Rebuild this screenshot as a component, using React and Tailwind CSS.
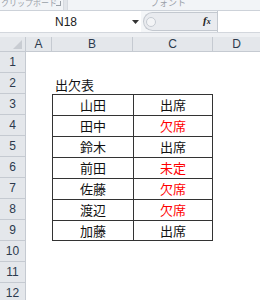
import React from 'react';

const rows = [
  null,
  null,
  { name: '山田', status: '出席' },
  { name: '田中', status: '欠席' },
  { name: '鈴木', status: '出席' },
  { name: '前田', status: '未定' },
  { name: '佐藤', status: '欠席' },
  { name: '渡辺', status: '欠席' },
  { name: '加藤', status: '出席' },
  null,
  null,
  null,
];

const cjk = { fontFamily: '"Noto Sans CJK JP", "Noto Sans", sans-serif' };

const RowHead = ({ n }) => (
  <div className="w-[26px] h-full shrink-0 bg-[#e4e7eb] border-r border-b border-[#c5cad1] flex items-center justify-center text-[12px] text-[#2c3a4d]">
    {n}
  </div>
);

const App = () => {
  return (
    <div
      className="w-[260px] h-[300px] overflow-hidden bg-white flex flex-col"
      style={{ fontFamily: '"Liberation Sans", "Noto Sans CJK JP", sans-serif' }}
    >
      {/* ribbon leftovers */}
      <div className="h-[10px] shrink-0 flex bg-[#f2f4f7] overflow-hidden">
        <div className="w-[64px] relative overflow-hidden border-r border-[#d6dae0]">
          <span className="absolute left-[1px] top-[-1px] text-[8px] leading-none whitespace-nowrap text-[#9aa0a8]" style={cjk}>
            クリップボード
          </span>
          <span className="absolute right-[2px] top-[1px] w-[5px] h-[5px] border-r border-b border-[#9aa0a8]" />
        </div>
        <div className="w-[3px] bg-[#e2e5ea]" />
        <div className="flex-1 relative overflow-hidden border-l border-[#d6dae0]">
          <span className="absolute left-[82px] top-[-2px] text-[9px] leading-none whitespace-nowrap text-[#9aa0a8]" style={cjk}>
            フォント
          </span>
        </div>
      </div>
      <div className="h-[1px] shrink-0 bg-[#cdd2d9]" />

      {/* formula bar */}
      <div className="h-[22px] shrink-0 flex bg-[#f4f6f8] border-b border-[#d3d7dd]">
        <div className="w-[141px] bg-white flex items-center relative">
          <span className="absolute left-[55px] text-[12px] leading-none text-[#222]">N18</span>
          <svg className="absolute left-[132px]" width="7" height="4" viewBox="0 0 7 4">
            <path d="M0 0h7L3.5 4z" fill="#333" />
          </svg>
        </div>
        <div className="flex-1 flex items-center">
          <div className="ml-[2px] h-[19px] w-[74px] rounded-l-full bg-[#e9ebef] border border-r-0 border-[#c3c8cf] flex items-center relative">
            <span className="ml-[2px] w-[10px] h-[10px] rounded-full border border-[#c6cbd2] bg-[#f3f4f6]" />
            <span
              className="absolute left-[59px] top-[2px] text-[11px] leading-none italic font-bold text-[#222]"
              style={{ fontFamily: '"Liberation Serif", serif' }}
            >
              f<span className="text-[8px]">x</span>
            </span>
          </div>
          <div className="h-full w-[1px] bg-[#c3c8cf]" />
          <div className="flex-1 h-full bg-white" />
        </div>
      </div>
      <div className="h-[4px] shrink-0 bg-[#eef0f3]" />

      {/* column headers */}
      <div className="h-[15px] shrink-0 flex bg-[#e4e7eb] border-b border-[#c5cad1] text-[12px] text-[#2c3a4d]">
        <div className="w-[26px] border-r border-[#c5cad1] relative">
          <svg className="absolute right-[3px] bottom-[2px]" width="9" height="9" viewBox="0 0 9 9">
            <path d="M9 0v9H0z" fill="#c8ccd2" />
          </svg>
        </div>
        <div className="w-[26px] border-r border-[#c5cad1] flex items-center justify-center">A</div>
        <div className="w-[81px] border-r border-[#c5cad1] flex items-center justify-center">B</div>
        <div className="w-[80px] border-r border-[#c5cad1] flex items-center justify-center">C</div>
        <div className="flex-1 flex items-center justify-center">D</div>
      </div>

      {/* sheet rows */}
      {rows.map((r, i) => {
        const last = i === 8;
        return (
          <div key={i} className="h-[21px] shrink-0 flex">
            <RowHead n={i + 1} />
            <div className="w-[26px] shrink-0" />
            {r ? (
              <>
                <div
                  className={`w-[81px] shrink-0 border-l border-t border-[#333] flex items-center justify-center text-[13px] text-[#111] ${last ? 'border-b' : ''}`}
                  style={cjk}
                >
                  {r.name}
                </div>
                <div
                  className={`w-[80px] shrink-0 border-l border-r border-t border-[#333] flex items-center justify-center text-[13px] ${r.status === '出席' ? 'text-[#111]' : 'text-[#ff0000]'} ${last ? 'border-b' : ''}`}
                  style={cjk}
                >
                  {r.status}
                </div>
              </>
            ) : i === 1 ? (
              <div className="w-[161px] shrink-0 flex items-end pl-[3px] text-[13px] text-[#111] leading-[18px]" style={cjk}>
                出欠表
              </div>
            ) : null}
          </div>
        );
      })}
    </div>
  );
};

export default App;
